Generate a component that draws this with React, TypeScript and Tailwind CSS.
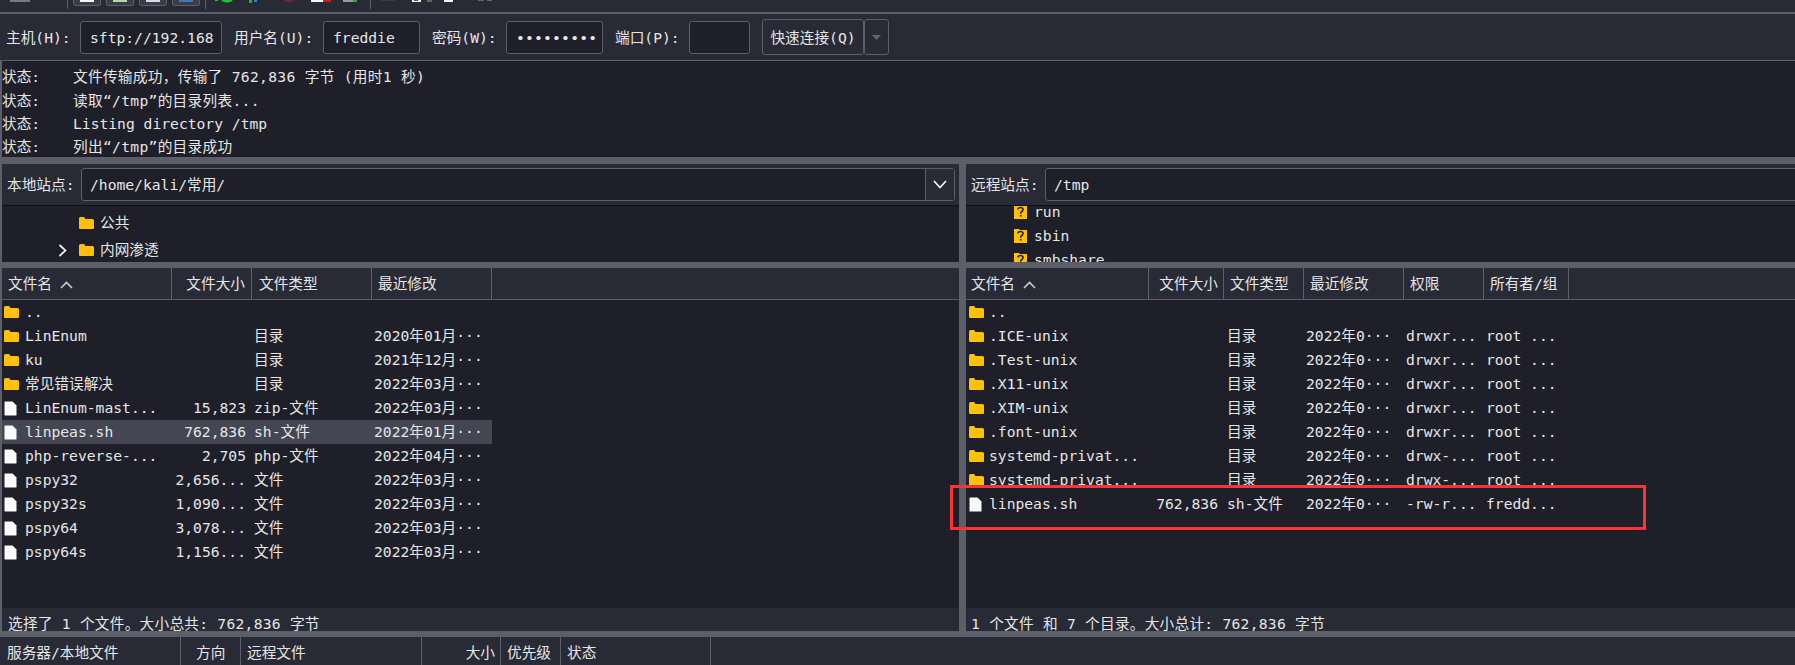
const FONT = "font-['DejaVu_Sans_Mono','Noto_Sans_CJK_SC',monospace]";

type Col = { w: string; head: string; text: string; label: string };

const Folder = () => (
  <svg width="15" height="14" viewBox="0 0 15 14" className="shrink-0">
    <path d="M0 2.5 Q0 1 1.5 1 H5 L6.5 3 H13.5 Q15 3 15 4.5 V12 Q15 13 14 13 H1 Q0 13 0 12 Z" fill="#ffc107" />
  </svg>
);

const FileIcon = () => (
  <svg width="13" height="15" viewBox="0 0 13 15" className="shrink-0">
    <path d="M0.5 1 Q0.5 0.5 1 0.5 H8.5 L12.5 4.5 V14 Q12.5 14.5 12 14.5 H1 Q0.5 14.5 0.5 14 Z" fill="#fafafa" />
  </svg>
);

const Unknown = () => (
  <svg width="15" height="16" viewBox="0 0 15 16" className="shrink-0">
    <path d="M1 1 H6 L7 2 H14 V15 H1 Z" fill="#ffc107" />
    <path d="M5 5.5 Q5 3.5 7.5 3.5 Q10 3.5 10 5.5 Q10 7 8.5 7.7 Q7.7 8.2 7.7 9.8 M7.7 11 V12.6" stroke="#2a2208" strokeWidth="1.6" fill="none" />
  </svg>
);

const leftCols: Col[] = [
  { w: "w-[170px]", head: "pl-[6px]", text: "pl-[2px]", label: "文件名" },
  { w: "w-[80px]", head: "justify-end pr-[6px]", text: "justify-end pr-[6px]", label: "文件大小" },
  { w: "w-[120px]", head: "pl-[7px]", text: "pl-[2px]", label: "文件类型" },
  { w: "w-[120px]", head: "pl-[6px]", text: "pl-[2px]", label: "最近修改" },
];

const rightCols: Col[] = [
  { w: "w-[183px]", head: "pl-[5px]", text: "pl-[3px]", label: "文件名" },
  { w: "w-[75px]", head: "justify-end pr-[5px]", text: "justify-end pr-[6px]", label: "文件大小" },
  { w: "w-[80px]", head: "pl-[6px]", text: "pl-[3px]", label: "文件类型" },
  { w: "w-[100px]", head: "pl-[6px]", text: "pl-[2px]", label: "最近修改" },
  { w: "w-[80px]", head: "pl-[6px]", text: "pl-[2px]", label: "权限" },
  { w: "w-[85px]", head: "pl-[6px]", text: "pl-[2px]", label: "所有者/组" },
];

const localFiles = [
  ["d", "..", "", "", ""],
  ["d", "LinEnum", "", "目录", "2020年01月···"],
  ["d", "ku", "", "目录", "2021年12月···"],
  ["d", "常见错误解决", "", "目录", "2022年03月···"],
  ["f", "LinEnum-mast...", "15,823", "zip-文件", "2022年03月···"],
  ["f", "linpeas.sh", "762,836", "sh-文件", "2022年01月···"],
  ["f", "php-reverse-...", "2,705", "php-文件", "2022年04月···"],
  ["f", "pspy32", "2,656...", "文件", "2022年03月···"],
  ["f", "pspy32s", "1,090...", "文件", "2022年03月···"],
  ["f", "pspy64", "3,078...", "文件", "2022年03月···"],
  ["f", "pspy64s", "1,156...", "文件", "2022年03月···"],
];

const remoteFiles = [
  ["d", "..", "", "", "", "", ""],
  ["d", ".ICE-unix", "", "目录", "2022年0···", "drwxr...", "root ..."],
  ["d", ".Test-unix", "", "目录", "2022年0···", "drwxr...", "root ..."],
  ["d", ".X11-unix", "", "目录", "2022年0···", "drwxr...", "root ..."],
  ["d", ".XIM-unix", "", "目录", "2022年0···", "drwxr...", "root ..."],
  ["d", ".font-unix", "", "目录", "2022年0···", "drwxr...", "root ..."],
  ["d", "systemd-privat...", "", "目录", "2022年0···", "drwx-...", "root ..."],
  ["d", "systemd-privat...", "", "目录", "2022年0···", "drwx-...", "root ..."],
  ["f", "linpeas.sh", "762,836", "sh-文件", "2022年0···", "-rw-r...", "fredd..."],
];

const logLines = [
  { text: "文件传输成功，传输了 762,836 字节 (用时1 秒)", cjk: true },
  { text: "读取“/tmp”的目录列表...", cjk: true },
  { text: "Listing directory /tmp", cjk: false },
  { text: "列出“/tmp”的目录成功", cjk: true },
];

const Header = ({ cols }: { cols: Col[] }) => (
  <div className="flex h-[32px] shrink-0 border-b border-[#5c5f68] bg-[#282a36]">
    {cols.map((c, i) => (
      <div key={c.label} className={`flex items-center whitespace-nowrap border-r border-[#5c5f68] pt-[2px] ${c.w} ${c.head}`}>
        {c.label}
        {i === 0 && (
          <svg width="13" height="8" viewBox="0 0 13 8" className="ml-[8px]">
            <path d="M1 7 L6.5 1.5 L12 7" stroke="#c8cad0" strokeWidth="1.6" fill="none" />
          </svg>
        )}
      </div>
    ))}
  </div>
);

const Rows = ({ cols, files, selected, folderGap, fileGap }: { cols: Col[]; files: string[][]; selected?: number; folderGap: string; fileGap: string }) => (
  <div className="flex-1 overflow-hidden">
    {files.map((f, i) => (
      <div key={i} className={`flex h-[24px] w-fit items-center ${i === selected ? "bg-[#444654]" : ""}`}>
        {cols.map((c, j) => (
          <div key={j} className={`flex items-center whitespace-nowrap ${c.w} ${c.text}`}>
            {j === 0 && (
              <>
                {f[0] === "d" ? <Folder /> : <FileIcon />}
                <span className={f[0] === "d" ? folderGap : fileGap}>{f[1]}</span>
              </>
            )}
            {j > 0 && f[j + 1]}
          </div>
        ))}
      </div>
    ))}
  </div>
);

const SiteBar = ({ label, path, arrow }: { label: string; path: string; arrow?: boolean }) => (
  <div className={`flex h-[42px] shrink-0 items-center border-b border-[#0f1015] bg-[#282a36] pl-[5px] ${arrow ? "pr-[4px]" : ""}`}>
    <span className="w-[74px] shrink-0 whitespace-nowrap pt-[2px]">{label}</span>
    <div className={`flex h-[33px] flex-1 items-center rounded-[3px] border border-[#5c5f68] bg-[#1e1f29] ${arrow ? "" : "-mr-[6px]"}`}>
      <span className="flex-1 pl-[8px] pt-[2px]">{path}</span>
      {arrow && (
        <span className="flex h-full w-[29px] items-center justify-center border-l border-[#5c5f68] bg-[#282a36]">
          <svg width="14" height="9" viewBox="0 0 14 9">
            <path d="M1 1 L7 7.5 L13 1" stroke="#f0f0f0" strokeWidth="1.8" fill="none" />
          </svg>
        </span>
      )}
    </div>
  </div>
);

const Field = ({ label, value, labelW, inputW, dots }: { label: string; value: string; labelW: string; inputW: string; dots?: boolean }) => (
  <>
    <span className={`whitespace-nowrap pt-[2px] ${labelW}`}>{label}</span>
    <div className={`flex h-[33px] items-center overflow-hidden rounded-[3px] border border-[#5c5f68] bg-[#1e1f29] pl-[9px] pt-[2px] whitespace-nowrap ${inputW} ${dots ? "tracking-[0.2px]" : ""}`}>
      {value}
    </div>
  </>
);

const Toolbar = () => (
  <div className="flex h-[12px] shrink-0 items-start overflow-hidden bg-[#282a36]">
    <div className="ml-[10px] h-[2px] w-[20px] bg-[#777a82]" />
    <div className="ml-[37px] h-[9px] w-px bg-[#5c5f68]" />
    <div className="ml-[5px] flex gap-[5px]">
      {["#f2f2f2", "#b8d6ac", "#cfdcec", "#3f78b8"].map((c) => (
        <div key={c} className="flex h-[6px] w-[28px] justify-center rounded-b-[3px] border border-t-0 border-[#5c5f68] bg-[#3a3c48]">
          <div className="h-[2px] w-[14px]" style={{ background: c }} />
        </div>
      ))}
    </div>
    <div className="ml-[5px] h-[9px] w-px bg-[#5c5f68]" />
    <svg width="166" height="4" viewBox="0 0 166 4" className="ml-[9px]">
      <ellipse cx="12" cy="-1" rx="6" ry="3.5" fill="#22c52e" />
      <rect x="0" y="0" width="3" height="1" fill="#22c52e" />
      <rect x="34" y="0" width="3" height="3" fill="#22b43a" />
      <rect x="39" y="0" width="3" height="2" fill="#2a7fe0" />
      <ellipse cx="74" cy="-1" rx="6" ry="3" fill="#7c2230" />
      <rect x="96" y="0" width="12" height="2" fill="#f4f4f4" />
      <rect x="108" y="0" width="8" height="2" fill="#c81e1e" />
      <rect x="128" y="0" width="10" height="2" fill="#9a9a9a" />
      <rect x="138" y="0" width="4" height="2" fill="#3a9a4a" />
    </svg>
    <div className="ml-[-11px] h-[9px] w-px bg-[#5c5f68]" />
    <svg width="122" height="4" viewBox="0 0 122 4" className="ml-[10px]">
      <rect x="0" y="0" width="14" height="1" fill="#3a3c48" />
      <rect x="31" y="0" width="9" height="2" fill="#f4f4f4" />
      <rect x="33" y="0" width="4" height="1" fill="#c81e1e" />
      <rect x="46" y="0" width="5" height="2" fill="#666" />
      <rect x="63" y="0" width="9" height="2" fill="#f4f4f4" />
      <rect x="97" y="0" width="6" height="1" fill="#666" />
      <rect x="106" y="0" width="5" height="1" fill="#666" />
    </svg>
  </div>
);

export default function App() {
  return (
    <div className={`relative flex h-[665px] w-[1795px] flex-col overflow-hidden bg-[#5c5f68] text-[14.67px] leading-none text-[#e6e6e6] ${FONT}`}>
      <Toolbar />
      <div className="mt-[2px] flex h-[46px] shrink-0 items-center bg-[#282a36] pl-[6px]">
        <Field label="主机(H):" value="sftp://192.168" labelW="w-[74px]" inputW="w-[142px]" />
        <div className="w-[12px]" />
        <Field label="用户名(U):" value="freddie" labelW="w-[89px]" inputW="w-[97px]" />
        <div className="w-[12px]" />
        <Field label="密码(W):" value="•••••••••" labelW="w-[74px]" inputW="w-[97px]" dots />
        <div className="w-[12px]" />
        <Field label="端口(P):" value="" labelW="w-[74px]" inputW="w-[61px]" />
        <div className="ml-[12px] flex h-[36px] w-[102px] items-center justify-center rounded-[3px] border border-[#5c5f68] bg-[#282a36] pt-[2px] whitespace-nowrap">
          快速连接(Q)
        </div>
        <div className="flex h-[36px] w-[25px] items-center justify-center rounded-[3px] border border-[#5c5f68] bg-[#282a36]">
          <svg width="9" height="5" viewBox="0 0 9 5">
            <path d="M0 0 H9 L4.5 5 Z" fill="#62656e" />
          </svg>
        </div>
      </div>
      <div className="ml-[2px] mt-px h-[96px] shrink-0 overflow-hidden bg-[#1e1f29] pt-[5px]">
        {logLines.map((l) => (
          <div key={l.text} className="flex h-[23.3px] items-center whitespace-nowrap">
            <span className="w-[71px] shrink-0">状态:</span>
            <span className={l.cjk ? "tracking-[0.3px]" : ""}>{l.text}</span>
          </div>
        ))}
      </div>
      <div className="mt-[7px] flex h-[467px] shrink-0">
        <div className="ml-[2px] flex w-[957px] shrink-0 flex-col">
          <SiteBar label="本地站点:" path="/home/kali/常用/" arrow />
          <div className="h-[56px] shrink-0 overflow-hidden bg-[#1e1f29]">
            <div className="flex h-[31px] items-center pl-[77px] pt-[3px]">
              <Folder />
              <span className="ml-[6px]">公共</span>
            </div>
            <div className="flex h-[26px] items-center pl-[56px]">
              <svg width="9" height="13" viewBox="0 0 9 13">
                <path d="M1.5 1 L7.5 6.5 L1.5 12" stroke="#f0f0f0" strokeWidth="1.7" fill="none" />
              </svg>
              <span className="ml-[12px] flex items-center">
                <Folder />
                <span className="ml-[6px]">内网渗透</span>
              </span>
            </div>
          </div>
          <div className="mt-[6px] flex h-[340px] shrink-0 flex-col bg-[#1e1f29]">
            <Header cols={leftCols} />
            <Rows cols={leftCols} files={localFiles} selected={5} folderGap="ml-[6px]" fileGap="ml-[8px]" />
          </div>
          <div className="h-[23px] shrink-0 overflow-hidden bg-[#282a36] pl-[6px] pt-[9px] tracking-[0.25px] whitespace-nowrap">
            选择了 1 个文件。大小总共: 762,836 字节
          </div>
        </div>
        <div className="ml-[7px] flex flex-1 flex-col overflow-hidden">
          <SiteBar label="远程站点:" path="/tmp" />
          <div className="h-[56px] shrink-0 overflow-hidden bg-[#1e1f29] pl-[47px]">
            <div className="-mt-[6px]">
              {["run", "sbin", "smbshare"].map((n) => (
                <div key={n} className="flex h-[24px] items-center">
                  <Unknown />
                  <span className="ml-[6px]">{n}</span>
                </div>
              ))}
            </div>
          </div>
          <div className="mt-[6px] flex h-[340px] shrink-0 flex-col bg-[#1e1f29]">
            <Header cols={rightCols} />
            <Rows cols={rightCols} files={remoteFiles} folderGap="ml-[5px]" fileGap="ml-[7px]" />
          </div>
          <div className="h-[23px] shrink-0 overflow-hidden bg-[#282a36] pl-[5px] pt-[9px] tracking-[0.25px] whitespace-nowrap">
            1 个文件 和 7 个目录。大小总计: 762,836 字节
          </div>
        </div>
      </div>
      <div className="mt-[6px] flex h-[28px] flex-1 bg-[#282a36]">
        {[
          ["w-[181px]", "pl-[7px]", "服务器/本地文件"],
          ["w-[60px]", "pl-[15px]", "方向"],
          ["w-[181px]", "pl-[6px]", "远程文件"],
          ["w-[79px]", "justify-end pr-[5px]", "大小"],
          ["w-[60px]", "pl-[6px]", "优先级"],
          ["w-[150px]", "pl-[6px]", "状态"],
        ].map(([w, p, t]) => (
          <div key={t} className={`flex items-center whitespace-nowrap border-r border-[#5c5f68] pt-[5px] ${w} ${p}`}>
            {t}
          </div>
        ))}
      </div>
      <div className="absolute left-[950px] top-[485px] h-[45px] w-[696px] border-[3px] border-[#f83434]" />
    </div>
  );
}
